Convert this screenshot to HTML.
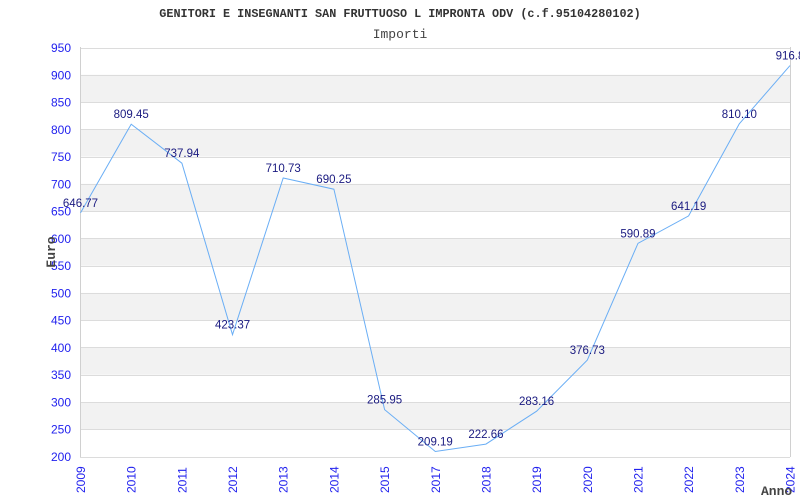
<!DOCTYPE html>
<html><head><meta charset="utf-8"><style>
html,body{margin:0;padding:0;background:#fff;width:800px;height:500px;overflow:hidden}
svg{display:block}
</style></head><body>
<svg width="800" height="500" xmlns="http://www.w3.org/2000/svg">
<rect width="800" height="500" fill="#fff"/>
<g id="bands" fill="#f2f2f2"></g>
<g id="grid" stroke="#dcdcdc" stroke-width="1"></g>
<line x1="80.5" y1="47" x2="80.5" y2="457" stroke="#d0d0d0"/>
<line x1="790.5" y1="47" x2="790.5" y2="457" stroke="#d0d0d0"/>
<g id="ylab" font-family="Liberation Sans, sans-serif" font-size="12" fill="#2222ee" text-anchor="end"></g>
<g id="xlab" font-family="Liberation Sans, sans-serif" font-size="12" fill="#2222ee"></g>
<polyline id="line" fill="none" stroke="#6aaef5" stroke-width="1"/>
<g id="vlab" font-family="Liberation Sans, sans-serif" font-size="11.5" fill="#1a1a80" text-anchor="middle"></g>
<text x="400" y="17" text-anchor="middle" font-family="Liberation Mono, monospace" font-weight="bold" font-size="11.8" fill="#333">GENITORI E INSEGNANTI SAN FRUTTUOSO L IMPRONTA ODV (c.f.95104280102)</text>
<text x="400" y="38" text-anchor="middle" font-family="Liberation Mono, monospace" font-size="13" fill="#444">Importi</text>
<text transform="translate(55,252) rotate(-90)" text-anchor="middle" font-family="Liberation Mono, monospace" font-weight="bold" font-size="13" fill="#444">Euro</text>
<text x="761" y="495" font-family="Liberation Mono, monospace" font-weight="bold" font-size="13" fill="#444">Anno</text>
</svg>
<script>
var ns="http://www.w3.org/2000/svg";
function el(p,t,a,txt){var e=document.createElementNS(ns,t);for(var k in a)e.setAttribute(k,a[k]);if(txt!=null)e.textContent=txt;document.getElementById(p).appendChild(e);return e;}
function Y(v){return 456.5-(v-200)*0.5453;}
for(var v=250;v<900;v+=100){el("bands","rect",{x:81,y:Y(v+50),width:709,height:Y(v)-Y(v+50)});}
for(var v=200;v<=950;v+=50){var y=Math.round(Y(v))+0.5;el("grid","line",{x1:80,x2:790,y1:y,y2:y});el("ylab","text",{x:71,y:Y(v)+4.5},v);}
var yrs=[2009,2010,2011,2012,2013,2014,2015,2017,2018,2019,2020,2021,2022,2023,2024];
var vals=[646.77,809.45,737.94,423.37,710.73,690.25,285.95,209.19,222.66,283.16,376.73,590.89,641.19,810.10,916.8];
var lbl=["646.77","809.45","737.94","423.37","710.73","690.25","285.95","209.19","222.66","283.16","376.73","590.89","641.19","810.10","916.8"];
var pts=[];
for(var i=0;i<15;i++){var x=80.5+i*(709.5/14);var y=Y(vals[i]);pts.push(x.toFixed(1)+","+y.toFixed(1));
el("vlab","text",{x:x,y:y-6},lbl[i]);
el("xlab","text",{transform:"translate("+(x+4.5)+",493) rotate(-90)"},yrs[i]);}
document.getElementById("line").setAttribute("points",pts.join(" "));
</script>
</body></html>
